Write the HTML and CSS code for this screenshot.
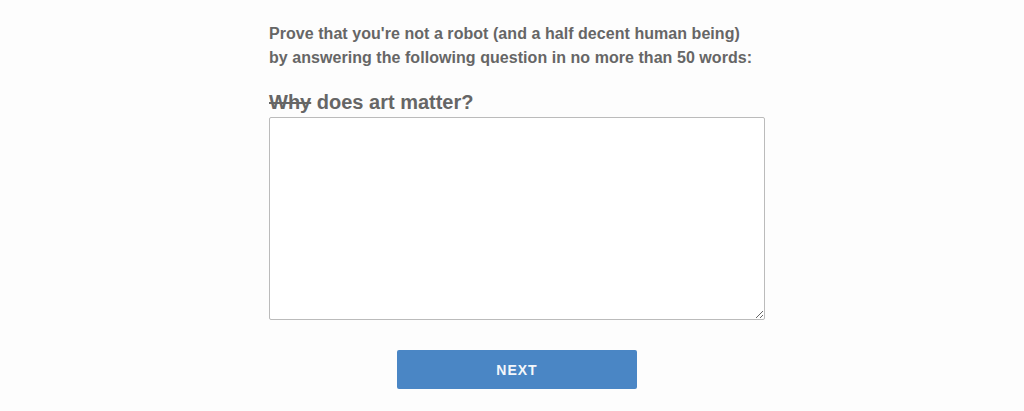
FILE: index.html
```html
<!DOCTYPE html>
<html lang="en">
<head>
  <meta charset="UTF-8">
  <title>Prove you're human</title>
  <link rel="stylesheet" href="styles.css">
</head>
<body>

  <form class="challenge">
    <p class="intro">Prove that you're not a robot (and a half decent human being)<br>by answering the following question in no more than 50 words:</p>

    <label class="question" for="answer"><s>Why</s> does art matter?</label>
    <textarea id="answer" class="answer"></textarea>

    <div class="actions">
      <button type="submit" class="next">NEXT</button>
    </div>
  </form>

</body>
</html>
```

FILE: styles.css
```css
body { margin: 0; background: #fdfdfd; font-family: "Liberation Sans", Arial, sans-serif; color: #666; }
.challenge { width: 496px; margin-left: calc(50% - 243px); padding-top: 22px; }
.intro { margin: 0; font-size: 16px; font-weight: bold; line-height: 24px; letter-spacing: 0.05px; }
.question { display: block; margin-top: 20px; font-size: 20px; font-weight: bold; line-height: 24px; }
.question s { text-decoration-thickness: 1.5px; }
.answer { display: block; box-sizing: border-box; width: 496px; height: 203px; margin-top: 3px; border: 1px solid #bbb; border-radius: 2px; background: #fff; resize: vertical; }
.actions { display: flex; justify-content: center; margin-top: 30px; }
.next { width: 240px; height: 39px; border: none; border-radius: 2px; background: #4a86c5; color: #f4f7fb; font-family: "Liberation Sans", Arial, sans-serif; font-size: 14px; font-weight: bold; letter-spacing: 1px; }
```
